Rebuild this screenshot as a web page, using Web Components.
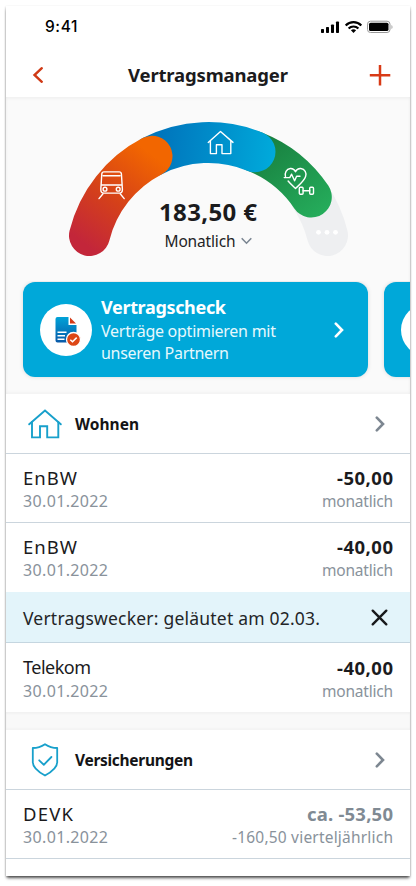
<!DOCTYPE html>
<html lang="de">
<head>
<meta charset="utf-8">
<title>Vertragsmanager</title>
<style>
html,body{margin:0;padding:0;background:#fff}
body{width:416px;height:886px;overflow:hidden;font-family:"Noto Sans","Open Sans",sans-serif;color:#1b1b1d}
</style>
</head>
<body>
<phone-app></phone-app>
<script>
const define=(name,html,setup)=>{
  const t=document.createElement('template');t.innerHTML=html;
  customElements.define(name,class extends HTMLElement{
    connectedCallback(){
      if(this.shadowRoot)return;
      this.attachShadow({mode:'open'}).append(t.content.cloneNode(true));
      if(setup)setup(this,this.shadowRoot);
    }
  });
};

/* One line of text whose tracking is adjusted to a given width. */
define('tracked-text',`<style>:host{display:block;white-space:nowrap;width:max-content}span{display:inline-block}</style><span></span>`,(el,root)=>{
  const s=root.querySelector('span');
  const text=el.getAttribute('text');
  s.textContent=text;
  const w=parseFloat(el.getAttribute('w'));
  if(!w)return;
  const ls=(w-s.getBoundingClientRect().width)/(text.length-1);
  s.style.letterSpacing=ls+'px';
  s.style.marginRight=-ls+'px';
});

define('chevron-icon',`<style>:host{display:block;width:10px;height:16px}svg{display:block}</style>
<svg width="10" height="16" viewBox="0 0 10 16" fill="none" stroke="currentColor" stroke-width="2.600" stroke-linecap="round" stroke-linejoin="miter"><path d="M1.8 1.700 8 8 1.800 14.300"/></svg>`);

define('house-icon',`<style>:host{display:block;width:34px;height:30px}svg{display:block;width:100%;height:100%}</style>
<svg viewBox="0 0 34 30" fill="none" stroke="currentColor" stroke-width="1.900" stroke-linecap="round"><path d="M1.200 15.300 17 1.500 32.800 15.300"/><path d="M4 13v15.400h8V17.200h7.200v11.200H30.300V13"/></svg>`);

define('shield-icon',`<style>:host{display:block;width:34px;height:34px}svg{display:block}</style>
<svg width="34" height="34" viewBox="0 0 34 34" fill="none" stroke="currentColor" stroke-width="1.800" stroke-linecap="round" stroke-linejoin="round"><path d="M17 1.200C13 3.900 9.300 5 4.800 5v14.200c0 6 6.600 10.200 12.200 13.300 5.600-3.100 12.200-7.300 12.200-13.300V5C24.700 5 21 3.900 17 1.200z"/><path d="M11.200 17.300l4.600 4.500 7.600-7.800"/></svg>`);

define('status-bar',`<style>:host{display:flex;justify-content:space-between;align-items:center;height:42px;padding:0 17px 0 39px;color:#000}
tracked-text{font:500 15.500px/20px Inter,sans-serif}svg{display:block}</style>
<tracked-text text="9:41" w="32.500"></tracked-text>
<svg width="73" height="14" viewBox="0 0 73 14"><g><rect x="1" y="9" width="3" height="4" rx=".8"/><rect x="6" y="7" width="3" height="6" rx=".8"/><rect x="11" y="4.500" width="3" height="8.500" rx=".8"/><rect x="16" y="1.500" width="3" height="11.500" rx=".8"/></g>
<g fill="none" stroke="#000" stroke-width="2.200"><path d="M25.700 5.500C30 1 37 1 41.300 5.500"/><path d="M28.600 8.600c2.700-2.800 7.100-2.800 9.800 0"/></g><path d="M30.900 10.300c1.500-1.300 3.700-1.300 5.200 0L33.500 13z"/>
<rect x="47.500" y="1.200" width="22.500" height="11.300" rx="3" fill="none" stroke="#999"/><rect x="49" y="2.700" width="19.500" height="8.300" rx="1.600"/><path d="M71.500 5v4c1.300-.6 1.300-3.400 0-4z" fill="#999"/></svg>`);

define('nav-bar',`<style>:host{display:grid;grid-template-columns:42px 1fr 42px;align-items:center;height:49px;padding-top:5px;box-sizing:border-box}
tracked-text{font-weight:700;font-size:18.500px;line-height:26px;justify-self:center}svg{display:block}</style>
<svg width="42" height="24" fill="none" stroke="#d03a16" stroke-width="2.400" stroke-linecap="round"><path d="M35.800 5.200 28.500 12l7.300 6.800"/></svg>
<tracked-text text="Vertragsmanager" w="160"></tracked-text>
<svg width="42" height="24" fill="none" stroke="#d83a16" stroke-width="2.500"><path d="M1.800 12.300h20.500M12 2v20.500"/></svg>`);

define('contract-gauge',`<style>:host{display:grid;justify-items:center;height:184px}
svg,div{grid-area:1/1}svg{display:block}
div{display:grid;justify-items:center;align-content:start;padding-top:101px}
.sum{font-weight:700;font-size:24px;line-height:28px}
.per{display:flex;align-items:center;gap:5px;font-size:15.500px;line-height:26px;padding-top:2px;color:#232325}
.per svg{width:11px;height:8px}</style>
<svg width="404" height="184" viewBox="6 97 404 184" fill="none">
<defs>
<linearGradient id="o" gradientUnits="userSpaceOnUse" x1="86" y1="245" x2="156" y2="150"><stop stop-color="#c3263a"/><stop offset=".45" stop-color="#d54119"/><stop offset=".95" stop-color="#f26600"/></linearGradient>
<linearGradient id="b" gradientUnits="userSpaceOnUse" x1="160" y1="145" x2="274" y2="160"><stop stop-color="#0076bd"/><stop offset=".5" stop-color="#008fcb"/><stop offset="1" stop-color="#00aadb"/></linearGradient>
<linearGradient id="g" gradientUnits="userSpaceOnUse" x1="266" y1="145" x2="320" y2="215"><stop stop-color="#198241"/><stop offset="1" stop-color="#25ac5b"/></linearGradient>
</defs>
<g stroke-width="41" stroke-linecap="round">
<path stroke="#eeeff1" d="M310.500 197A122.500 122.500 0 0 1 327.500 235.500"/>
<path stroke="url(#g)" d="M255 151.700A122.500 122.500 0 0 1 311.300 197"/>
<path stroke="url(#b)" d="M152 156.300A122.500 122.500 0 0 1 255 151.700"/>
<path stroke="url(#o)" d="M89.500 235.500A122.500 122.500 0 0 1 152 156.300"/>
</g>
<g fill="#fff"><circle cx="318.500" cy="232.300" r="2.400"/><circle cx="327" cy="232.300" r="2.400"/><circle cx="335.500" cy="232.300" r="2.400"/></g>
<g stroke="#fff" stroke-width="1.400" stroke-linecap="round" stroke-linejoin="round">
<path d="M104 171.900h15.200q2 0 2.200 2l1 15.500q0 3.700-3 3.700h-15.600q-3 0-3-3.700l1-15.500q.2-2 2.200-2zM103.200 175.700h16.800M101.500 185h20.200"/><circle cx="105" cy="189.200" r="1.900"/><circle cx="118.200" cy="189.200" r="1.900"/><path d="M103 193.800l-4 4.800M120.200 193.800l4 4.800"/>
<path d="M208.200 142.400 220.500 131.500 233 142.400M210.400 141v12.600h6V144.700h5.600v8.900H230.800V141"/>
<path d="M285.500 176.500c-1-3.400.8-7.700 4.800-8 2.500-.2 4.300 1.300 5.200 3.300.9-2 2.800-3.500 5.300-3.300 4.200.3 6 4.600 4.800 8-1.300 4.200-6.400 8.500-10.100 12-2.300-2.200-5.200-4.800-7.400-7.500M284.200 177.600h5.600l1.800-3.400 3 6.600 2-4.500h3.400"/>
<rect x="299.300" y="187.300" width="3.800" height="7" rx="1"/><rect x="309.700" y="187.300" width="3.800" height="7" rx="1"/><path d="M303.100 190.800h6.600"/>
</g></svg>
<div><tracked-text class="sum" text="183,50 €" w="98"></tracked-text>
<span class="per"><tracked-text text="Monatlich" w="71"></tracked-text><svg width="11" height="8" fill="none" stroke="#7b8692" stroke-width="1.600"><path d="M.7 1.200 5.500 6.200 10.300 1.200"/></svg></span></div>`);

define('promo-card',`<style>:host{display:flex;align-items:center;flex:none;box-sizing:border-box;width:345px;height:95px;border-radius:12px;background:#00a8d9;color:#fff;padding:0 24px 0 17px;box-shadow:0 0 4px #0002}
.disc{width:52px;height:52px;border-radius:50%;background:#fff;flex:none;margin-right:9px}
.disc svg{display:block}
.copy{flex:1;font-size:16px;line-height:22px}.copy .h{font-size:18px;font-weight:700;line-height:25px}
.copy .l{color:#e6f8fd}</style>
<div class="disc"><svg width="52" height="52" viewBox="0 0 52 52"><defs><linearGradient id="d" x1="0" y1="0" x2="0" y2="1"><stop stop-color="#00a3d8"/><stop offset="1" stop-color="#0859a8"/></linearGradient></defs>
<path fill="url(#d)" d="M17.500 13H28.500V21H36.500V38.500H17.500Q15.500 38.500 15.500 36.500V15Q15.500 13 17.500 13z"/><path fill="#d43b18" d="M30 13.500 36 19.600H30z"/>
<path stroke="#fff" stroke-width="1.500" d="M17.500 28.300h9M17.500 31.800h7.500M17.500 35.300h7"/>
<circle cx="33.500" cy="35.500" r="7" fill="#dd4716" stroke="#fff" stroke-width="1.300"/><path fill="none" stroke="#fff" stroke-width="1.500" d="M30.300 35.700l2.200 2.100 4.200-4.200"/></svg></div>
<div class="copy"><tracked-text class="h" text="Vertragscheck" w="125"></tracked-text><tracked-text class="l" text="Verträge optimieren mit" w="175"></tracked-text><tracked-text class="l" text="unseren Partnern" w="128"></tracked-text></div>
<chevron-icon></chevron-icon>`);

define('card-strip',`<style>:host{display:flex;gap:16px;padding:1px 0 0 17px;overflow:hidden;height:112px;align-items:flex-start;box-sizing:border-box}
.next{flex:none;display:flex;align-items:center;width:90px;height:95px;border-radius:12px;background:#00a8d9;padding-left:17px;box-sizing:border-box;box-shadow:0 0 4px #0002}.next i{width:52px;height:52px;border-radius:50%;background:#fff}</style>
<promo-card></promo-card><div class="next"><i></i></div>`);

define('section-head',`<style>:host{display:flex;align-items:center;height:60px;box-sizing:border-box;padding:0 25px 0 22px;border-bottom:1px solid #cbd5dd;background:#fff}
.i{color:#18a0cb;margin-right:13px}.t{font-weight:700;font-size:15.500px;line-height:24px;flex:1;color:#141416}chevron-icon{color:#7d8791}</style>
<div class="i"><slot></slot></div><tracked-text class="t"></tracked-text><chevron-icon></chevron-icon>`,(el,r)=>{
  const t=document.createElement('tracked-text');t.className='t';
  t.setAttribute('text',el.getAttribute('label'));t.setAttribute('w',el.getAttribute('w'));
  r.querySelector('.t').replaceWith(t);
});

define('contract-row',`<style>:host{display:flex;justify-content:space-between;height:69px;box-sizing:border-box;padding:12px 17px 0 17px;border-bottom:1px solid #cbd5dd;background:#fff}
:host([last]){border-bottom-color:#fff}
:host([low]){padding-top:13px}
.r,.l{display:grid;align-content:start}.r{justify-items:end}
.a{font-size:18.500px;line-height:24px}:host([low]) .l .a{font-size:18px;margin-top:-1px;margin-bottom:1px}.r .a{font-weight:700}.b{font-size:16px;line-height:22px;color:#89929b}.r .b{font-size:15.500px;line-height:23px}
:host([muted]) .r .a{color:#808a93}</style><div class="l"></div><div class="r"></div>`,(el,r)=>{
  const put=(box,cls,key)=>{
    const [text,w]=el.getAttribute(key).split('|');
    const t=document.createElement('tracked-text');t.className=cls;t.setAttribute('text',text);t.setAttribute('w',w);
    r.querySelector(box).append(t);
  };
  put('.l','a','name');put('.l','b','date');put('.r','a','amount');put('.r','b','period');
});

define('alarm-banner',`<style>:host{display:flex;align-items:center;justify-content:space-between;height:51px;box-sizing:border-box;background:#e3f4fa;border-bottom:1px solid #c5d6e0;padding:1px 22px 0 17px;font-size:17.500px;line-height:24px;color:#232527}svg{display:block}</style>
<tracked-text text="Vertragswecker: geläutet am 02.03." w="297"></tracked-text>
<svg width="17" height="17" fill="none" stroke="#18191b" stroke-width="2.400" stroke-linecap="round"><path d="M1.700 1.700 15.300 15.300M15.300 1.700 1.700 15.300"/></svg>`);

define('phone-app',`<style>:host{display:block;box-sizing:border-box;width:416px;height:886px;padding:6px 6px 10px}
main{height:870px;background:#fff;overflow:hidden;border-radius:1px}
.shell{height:870px;box-shadow:0 3px 3px -1px #0009,0 1px 2px #0005}
.hero{background:#fafafa;height:297px;box-shadow:inset 0 2px 3px #0000000a,inset 0 -2px 3px #00000008}
.gap{height:18px;background:#f9f9f9;box-shadow:inset 0 2px 2px #00000008,inset 0 -2px 2px #00000006}</style>
<div class="shell"><main>
<status-bar></status-bar><nav-bar></nav-bar>
<div class="hero"><contract-gauge></contract-gauge><card-strip></card-strip></div>
<section-head label="Wohnen" w="64"><house-icon></house-icon></section-head>
<contract-row name="EnBW|54" date="30.01.2022|85" amount="-50,00|56" period="monatlich|71"></contract-row>
<contract-row last name="EnBW|54" date="30.01.2022|85" amount="-40,00|56" period="monatlich|71"></contract-row>
<alarm-banner></alarm-banner>
<contract-row last low name="Telekom|68" date="30.01.2022|85" amount="-40,00|56" period="monatlich|71"></contract-row>
<div class="gap"></div>
<section-head label="Versicherungen" w="118"><shield-icon></shield-icon></section-head>
<contract-row muted name="DEVK|50" date="30.01.2022|85" amount="ca. -53,50|86" period="-160,50 vierteljährlich|161"></contract-row>
</main></div>`);
</script>
</body>
</html>
